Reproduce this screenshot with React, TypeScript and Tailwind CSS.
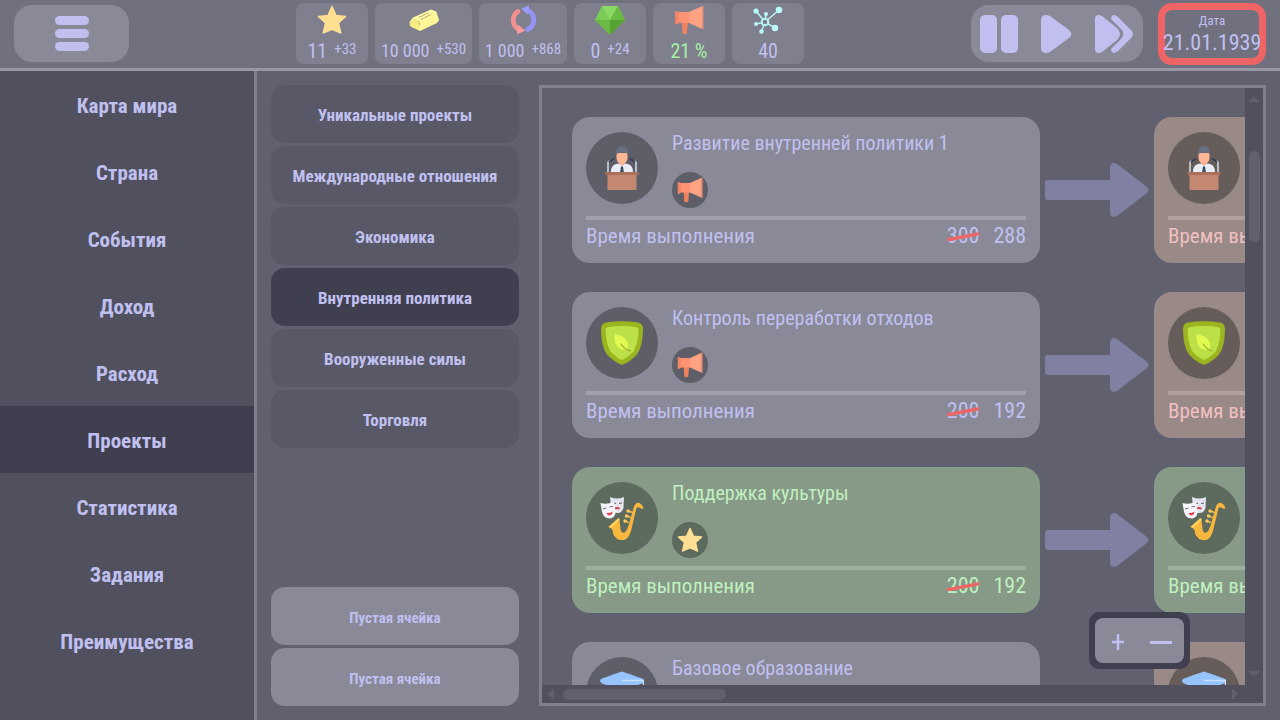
import type { ReactNode } from "react";

type IconProps = { className?: string };

function StarIcon({ className }: IconProps) {
  return (
    <svg viewBox="0 0 30 30" className={className} aria-hidden="true">
      <path
        d="M15 1.5 19 10.4 28.6 11.4 21.5 18 23.8 28 15 24.3 6.2 28 8.5 18 1.4 11.4 11 10.4Z"
        fill="#ffdf92"
        stroke="#ffdf92"
        strokeWidth="1.4"
        strokeLinejoin="round"
      />
    </svg>
  );
}

function GoldIcon({ className }: IconProps) {
  return (
    <svg viewBox="0 0 30 30" className={className} aria-hidden="true">
      <path d="M1 17 4 13 22 5 27 7 29.5 15 28 17.5 11 25.5 1.5 21Z" fill="#fff797" stroke="#fff797" strokeLinejoin="round" />
      <path d="M4 13 22 5 27 7 10 16Z" fill="#fffba6" />
      <path d="M1 17.5 4 13 10 16 10.5 25 1.5 21Z" fill="#f6ec86" />
      <path d="M10 16 10.5 20.5" fill="none" stroke="#b9b26c" strokeWidth="0.8" />
      <path d="m10 12.3 10.5-4.8M12 14.300 22.500 9.300" fill="none" stroke="#8f8b62" strokeWidth="0.8" strokeDasharray="3 0.7" />
    </svg>
  );
}

function CycleIcon({ className }: IconProps) {
  return (
    <svg viewBox="0 0 30 30" className={className} aria-hidden="true">
      <path d="M10 6.5A10.500 10.500 0 0 0 10 24" fill="none" stroke="#f28f8f" strokeWidth="4.8" strokeLinecap="round" />
      <path d="M9.5 28.5 10.5 20.5 16.5 25.5Z" fill="#ff9b9b" stroke="#ff9b9b" strokeLinejoin="round" />
      <path d="M19.5 24.5A10.500 10.500 0 0 0 20 5.500" fill="none" stroke="#9494f4" strokeWidth="4.8" strokeLinecap="round" />
      <path d="M14 4 20.5 1 20 9Z" fill="#9e9eff" stroke="#9e9eff" strokeLinejoin="round" />
    </svg>
  );
}

function GemIcon({ className }: IconProps) {
  return (
    <svg viewBox="0 0 30 30" className={className} aria-hidden="true">
      <path d="M7 1H23L30 15 15 30 0 15Z" fill="#6abb48" />
      <path d="M7 1 15 15H0Z" fill="#7bcb58" />
      <path d="M7 1H23L15 15Z" fill="#8ad867" />
      <path d="M23 1 30 15H15Z" fill="#6abb42" />
      <path d="M0 15H15V30Z" fill="#6ab944" />
      <path d="M15 15H30L15 30Z" fill="#55a233" />
    </svg>
  );
}

function MegaphoneIcon({ className }: IconProps) {
  return (
    <svg viewBox="0 0 30 30" className={className} aria-hidden="true">
      <path d="M8 15H13.5L12.5 28.5H9Z" fill="#ef8260" stroke="#ef8260" strokeLinejoin="round" />
      <path d="M1 6 5 7H16V18H5L1 19.500Z" fill="#ff9373" />
      <path d="M1 6 4.5 7V18.200L1 19.500Z" fill="#f58464" />
      <path d="M15 7 28.5 1V24L15 18Z" fill="#ffa283" />
      <path d="M28.5 1H29.500V24H28.500Z" fill="#f28e70" />
    </svg>
  );
}

function NetworkIcon({ className }: IconProps) {
  return (
    <svg viewBox="0 0 30 30" className={className} aria-hidden="true">
      <g stroke="#b4f7f3" strokeWidth="1.5" fill="none">
        <path d="M12 17 3 6M12 17 26 5M12 17 13 9M12 17 3 19M12 17 8.5 26.5M12 17 22 23" />
        <circle cx="12" cy="17" r="3.3" fill="#7f7f8e" strokeWidth="2" />
      </g>
      <g fill="#b9fbf7">
        <circle cx="3" cy="6" r="2.6" />
        <circle cx="26" cy="5" r="3.3" />
        <circle cx="13" cy="9" r="2" />
        <circle cx="3" cy="19" r="2" />
        <circle cx="8.5" cy="26.5" r="2.3" />
        <circle cx="22" cy="23" r="3.2" />
      </g>
    </svg>
  );
}

function SpeakerIcon({ className }: IconProps) {
  return (
    <svg viewBox="0 0 44 44" className={className} aria-hidden="true">
      <path d="M19 12h6v7l-3 2-3-2Z" fill="#f0a384" />
      <path d="M11 26c0-5 2-7.500 7-8.500l4 1.500 4-1.500c5 1 7 3.500 7 8.500Z" fill="#e9edf8" />
      <path d="m19 16 3 4 3-4v-2h-6Z" fill="#f3a98a" />
      <path d="m21 20.500h2l.8 5.500h-3.600Z" fill="#384764" />
      <path d="M16.5 7h11v4c0 4-2 7-5.500 7s-5.500-3-5.500-7Z" fill="#ffb796" />
      <path d="M16 8c-.5-5.500 2.500-8 6-8S28.500 2.500 28 8l-.5 1-1-2.500c-4 0-6-.5-8 .5-1.500 0-1.500 1-1.500 2Z" fill="#667080" />
      <path d="M8 27V17q0-2 2-2M36 27V17q0-2-2-2" fill="none" stroke="#d8dceb" strokeWidth="1.500" />
      <path d="m9.500 15.500 4-2.500M34.500 15.500 30.500 13" stroke="#34405b" strokeWidth="2" strokeLinecap="round" />
      <path d="M7.500 28H36.500V44H7.500Z" fill="#c48871" />
      <path d="M5.500 26H38.500V29H5.500Z" fill="#ac6f59" />
    </svg>
  );
}

function ShieldIcon({ className }: IconProps) {
  return (
    <svg viewBox="0 0 44 44" className={className} aria-hidden="true">
      <path d="M1 8Q1 2.500 6 1.500 22-1 38 1.500 43 2.500 43 8 43 25 37 33.500 30 41 22 44 14 41 7 33.500 1 25 1 8Z" fill="#9ab51f" />
      <path d="M5.500 9Q5.500 6.500 8 6 22 4 36 6 38.500 6.500 38.500 9 38 23 33.500 30.500 28 36.500 22 39 16 36.500 10.500 30.500 6 23 5.500 9Z" fill="#bce048" />
      <path d="M15 13C24 15 30 20 27.500 28 19 31 13 24 15 13Z" fill="#e0fa52" />
      <path d="M21 23q4 6 9.500 7" fill="none" stroke="#98a92b" strokeWidth="1.100" strokeLinecap="round" />
    </svg>
  );
}

function CultureIcon({ className }: IconProps) {
  return (
    <svg viewBox="0 0 44 44" className={className} aria-hidden="true">
      <path d="M10 1Q17 4 24 1L23.500 12Q22 17 17.500 17 12 17 11 11Z" fill="#e4e5ee" />
      <path d="m13 7 3 .5m3 0 3-.5" stroke="#5b5d70" strokeWidth="1" />
      <path d="M14 12q3-2 6 0l-1 1.500q-2-1-4 0Z" fill="#db3c43" />
      <path d="M.5 7Q7 9 14 5.500L15.500 15Q16 21 10.500 22.500 4 23 2 16Z" fill="#f5f5fb" />
      <path d="m3 13 3.500-1m3-1 3.500-.7" stroke="#6b6d7d" strokeWidth="1" />
      <path d="M6.500 17q3 .5 6-1.500 0 3.500-3 4-2 0-3-2.500Z" fill="#e34148" />
      <path d="M8.500 31 18.500 22C21 28 19.500 35 22.500 36.500 26 38 27.500 32 29 28L34 10.500Q36 6 39.500 7 42 8 43.500 12L42 13Q38 10 36.500 12L31 35Q28.500 44 22 44.500 13 43 12.500 34Q11 31.500 8.500 31Z" fill="#f7b63c" />
      <path d="M8.500 31 18.500 22 20 24 11.500 32Z" fill="#ffd05a" />
      <g fill="#ffc955">
        <circle cx="28" cy="15" r="1.700" />
        <circle cx="26.500" cy="20" r="1.700" />
        <circle cx="25" cy="25" r="1.700" />
        <path d="m28 14 5 2-.5 1-5-1ZM27 19l4 2-.5 1-4-1ZM25 24l4 2-.5 1-4-1Z" />
      </g>
    </svg>
  );
}

function CapIcon({ className }: IconProps) {
  return (
    <svg viewBox="0 0 44 44" className={className} aria-hidden="true">
      <path d="M9 13V25Q22 31 35 25V13Z" fill="#72a8f0" />
      <path d="M22 .500Q30 3 42 7.500 44 8.500 44 9.500 44 11 42 12.500L24 19Q22 20 20 19L2 12.500Q0 11 0 9.500 0 8.500 2 7.500 14 3 22 .500Z" fill="#96c4ff" />
      <path d="M22 9.500H43.500V24" fill="none" stroke="#c9e1ff" strokeWidth="1.600" />
    </svg>
  );
}

function ArrowIcon() {
  return (
    <svg viewBox="0 0 104 54" className="mx-[5px] w-[104px] shrink-0" aria-hidden="true">
      <path
        d="M3 17H65V4Q65.500 0 69.500 0L72 1 102 24Q105 27 102 30L72 53Q65.500 55.500 65 50V37H3Q0 37 0 34V20Q0 17 3 17Z"
        fill="#8080a2"
      />
    </svg>
  );
}

type Stat = { label: string; value: string; delta?: string; Icon: (p: IconProps) => ReactNode; size: string; color: string };

const NARROW = "min-w-[72px] text-xl";
const LILAC = "text-[#c0c0f0]";

const stats: Stat[] = [
  { label: "Рейтинг", value: "11", delta: "+33", Icon: StarIcon, size: NARROW, color: LILAC },
  { label: "Золото", value: "10 000", delta: "+530", Icon: GoldIcon, size: "min-w-[97px] text-lg", color: LILAC },
  { label: "Ресурсы", value: "1 000", delta: "+868", Icon: CycleIcon, size: "min-w-[88px] text-lg", color: LILAC },
  { label: "Кристаллы", value: "0", delta: "+24", Icon: GemIcon, size: NARROW, color: LILAC },
  { label: "Влияние", value: "21 %", Icon: MegaphoneIcon, size: NARROW, color: "text-[#a5f0a5]" },
  { label: "Связи", value: "40", Icon: NetworkIcon, size: NARROW, color: LILAC },
];

function StatCard({ stat }: { stat: Stat }) {
  const { Icon } = stat;
  return (
    <li title={stat.label} className={`flex h-[61px] flex-col items-center rounded-lg bg-[#7f7f8e] pt-[2px] ${stat.size}`}>
      <Icon className="size-[30px]" />
      <span className={`flex items-start gap-[7px] whitespace-nowrap pt-1 leading-6 ${stat.color}`}>
        {stat.value}
        {stat.delta && <span className="text-[15px] leading-5">{stat.delta}</span>}
      </span>
    </li>
  );
}

function Header() {
  return (
    <header className="flex h-[71px] shrink-0 items-start justify-between border-b-[3px] border-[#9797a5] bg-[#70707f] px-[14px] pt-[3px]">
      <button type="button" aria-label="Меню" className="mt-[2px] flex h-[57px] w-[115px] flex-col items-center justify-center gap-1 rounded-[18px] bg-[#898998]">
        <span className="h-[9px] w-[34px] rounded-full bg-[#c0bff0]" />
        <span className="h-[9px] w-[34px] rounded-full bg-[#c0bff0]" />
        <span className="h-[9px] w-[34px] rounded-full bg-[#c0bff0]" />
      </button>
      <ul className="flex gap-[7px]">
        {stats.map((stat) => (
          <StatCard key={stat.label} stat={stat} />
        ))}
      </ul>
      <div className="flex gap-[15px]">
        <div className="mt-[2px] flex h-[57px] items-center gap-[22px] rounded-[18px] bg-[#898998] px-[9px]">
          <button type="button" aria-label="Пауза">
            <svg viewBox="0 0 38 38" className="size-[38px]" fill="#c0bff0">
              <rect width="17" height="38" rx="5" />
              <rect x="21" width="17" height="38" rx="5" />
            </svg>
          </button>
          <button type="button" aria-label="Пуск">
            <svg viewBox="0 0 32 38" className="h-[38px] w-8" fill="#c0bff0">
              <path d="M1 5Q1 0 6 0 8 0 10 1L29 15Q34 19 29 23L10 37Q8 38 6 38 1 38 1 33Z" />
            </svg>
          </button>
          <button type="button" aria-label="Ускорить">
            <svg viewBox="0 0 40 38" className="h-[38px] w-10" fill="#c0bff0">
              <path d="M1 4Q1 0 4.500 0 6 0 8 1L23 13Q29 19 23 25L8 37Q6 38 4.500 38 1 38 1 34Z" />
              <path d="M17 4Q17 0 20.500 0L24 2 37 15Q41 19 37 23L24 36 20.500 38Q17 38 17 34L26 25Q33 19 26 13Z" />
            </svg>
          </button>
        </div>
        <div className="flex h-[62px] w-[108px] flex-col items-center justify-center rounded-[14px] border-[7px] border-[#ef6565] pt-[2px] text-[#c0c0f0]">
          <span className="text-[13px] leading-4">Дата</span>
          <time dateTime="1939-01-21" className="text-[22px] leading-7">21.01.1939</time>
        </div>
      </div>
    </header>
  );
}

const sections = ["Карта мира", "Страна", "События", "Доход", "Расход", "Проекты", "Статистика", "Задания", "Преимущества"];
const categories = ["Уникальные проекты", "Международные отношения", "Экономика", "Внутренняя политика", "Вооруженные силы", "Торговля"];

function Sidebar() {
  return (
    <nav className="w-[257px] shrink-0 border-r-[3px] border-[#7f7f8e] bg-[#50505f]">
      {sections.map((name) => (
        <a
          key={name}
          href="#"
          className={`flex h-[67px] items-center justify-center pt-1 text-[21px] font-bold text-[#c0c0f0] ${name === "Проекты" ? "bg-[#403f4f]" : ""}`}
        >
          {name}
        </a>
      ))}
    </nav>
  );
}

function Categories() {
  return (
    <div className="flex w-[248px] shrink-0 flex-col gap-[3px] text-[17px] font-bold text-[#c0c0f0]">
      {categories.map((name) => (
        <button
          key={name}
          type="button"
          className={`h-[58px] rounded-[14px] pt-1 ${name === "Внутренняя политика" ? "bg-[#403f4f]" : "bg-[#585867]"}`}
        >
          {name}
        </button>
      ))}
      <button type="button" className="mt-auto h-[58px] rounded-[14px] bg-[#898998] pt-1 text-[15px]">Пустая ячейка</button>
      <button type="button" className="h-[58px] rounded-[14px] bg-[#898998] pt-1 text-[15px]">Пустая ячейка</button>
    </div>
  );
}

const tones = {
  open: { card: "bg-[#898998] text-[#c0c0f0]", disc: "bg-[#5e5e68]", rule: "bg-[#a0a0af]" },
  done: { card: "bg-[#879987] text-[#bff0bf]", disc: "bg-[#5d6a5e]", rule: "bg-[#9eb09e]" },
  locked: { card: "bg-[#998987] text-[#f0c0c0]", disc: "bg-[#665c5a]", rule: "bg-[#b0a09f]" },
};

type Tone = keyof typeof tones;
type Project = { title: string; Icon: (p: IconProps) => ReactNode; Reward: (p: IconProps) => ReactNode; before: string; after: string; tone: Tone; nextTone: Tone };

const projects: Project[] = [
  { title: "Развитие внутренней политики 1", Icon: SpeakerIcon, Reward: MegaphoneIcon, before: "300", after: "288", tone: "open", nextTone: "locked" },
  { title: "Контроль переработки отходов", Icon: ShieldIcon, Reward: MegaphoneIcon, before: "200", after: "192", tone: "open", nextTone: "locked" },
  { title: "Поддержка культуры", Icon: CultureIcon, Reward: StarIcon, before: "200", after: "192", tone: "done", nextTone: "done" },
  { title: "Базовое образование", Icon: CapIcon, Reward: StarIcon, before: "200", after: "192", tone: "open", nextTone: "locked" },
];

function ProjectCard({ project, tone, next }: { project: Project; tone: Tone; next?: boolean }) {
  const { Icon, Reward } = project;
  const style = tones[tone];
  return (
    <article className={`h-[146px] w-[468px] shrink-0 rounded-[18px] px-[14px] pt-[15px] ${style.card}`}>
      <div className="flex h-[84px] gap-[14px]">
        <div className={`flex size-[72px] items-center justify-center rounded-full ${style.disc}`}>
          <Icon className="size-[44px]" />
        </div>
        {!next && (
          <div className="flex flex-col gap-[18px]">
            <h2 className="whitespace-nowrap text-xl leading-[22px]">{project.title}</h2>
            <div className={`flex size-9 items-center justify-center rounded-full ${style.disc}`}>
              <Reward className="size-[26px]" />
            </div>
          </div>
        )}
      </div>
      <div className={`h-1 ${style.rule}`} />
      <div className="flex gap-[14px] whitespace-nowrap text-[22px] leading-8">
        <span className="grow text-[21px]">Время выполнения</span>
        {!next && (
          <>
            <s className="relative no-underline">
              {project.before}
              <svg viewBox="0 0 34 12" className="absolute inset-x-0 top-[11px] w-full" aria-hidden="true">
                <path d="M1.500 9 32.500 3" stroke="#ef6565" strokeWidth="3.500" strokeLinecap="round" />
              </svg>
            </s>
            <span>{project.after}</span>
          </>
        )}
      </div>
    </article>
  );
}

function ProjectBoard() {
  return (
    <main className="relative grid min-w-0 grow grid-cols-[minmax(0,1fr)_18px] grid-rows-[minmax(0,1fr)_18px] border-[3px] border-[#7f7f8e] bg-[#50505f]">
      <div className="flex flex-col gap-[29px] overflow-hidden bg-[#60606f] pl-[30px] pt-[29px]">
        {projects.map((project) => (
          <div key={project.title} className="flex items-center">
            <ProjectCard project={project} tone={project.tone} />
            <ArrowIcon />
            <ProjectCard project={project} tone={project.nextTone} next />
          </div>
        ))}
      </div>
      <div className="flex flex-col items-center py-2">
        <svg viewBox="0 0 12 6" className="w-3" fill="#60606f"><path d="M0 6 6 0 12 6Z" /></svg>
        <div className="mt-[49px] h-[91px] w-[11px] rounded-full bg-[#60606f]" />
        <svg viewBox="0 0 12 6" className="mt-auto w-3" fill="#60606f"><path d="M0 0H12L6 6Z" /></svg>
      </div>
      <div className="flex items-center pl-[6px] pr-[7px]">
        <svg viewBox="0 0 6 12" className="h-3" fill="#60606f"><path d="M6 0V12L0 6Z" /></svg>
        <div className="ml-[9px] h-[11px] w-[163px] rounded-full bg-[#60606f]" />
        <svg viewBox="0 0 6 12" className="ml-auto h-3" fill="#60606f"><path d="M0 0 6 6 0 12Z" /></svg>
      </div>
      <div className="absolute bottom-[34px] right-[73px] flex h-[57px] w-[101px] rounded-[10px] border-[6px] border-[#403f4f] bg-[#403f4f]">
        <div className="flex grow items-center justify-between rounded-lg bg-[#898998] pl-[17px] pr-3 pt-[3px]">
          <button type="button" aria-label="Увеличить">
            <svg viewBox="0 0 12 16" className="w-3" stroke="#c0c0f0" strokeWidth="2.500"><path d="M6 0V16M0 8H12" /></svg>
          </button>
          <button type="button" aria-label="Уменьшить">
            <svg viewBox="0 0 22 16" className="w-[22px]" stroke="#c0c0f0" strokeWidth="3"><path d="M0 8.500H22" /></svg>
          </button>
        </div>
      </div>
    </main>
  );
}

export default function App() {
  return (
    <div className="flex h-screen flex-col overflow-hidden bg-[#60606f] font-['Roboto_Condensed','Liberation_Sans_Narrow','Open_Sans_Condensed','DejaVu_Sans_Condensed',sans-serif]">
      <Header />
      <div className="flex min-h-0 grow">
        <Sidebar />
        <div className="flex min-w-0 grow gap-5 p-[14px]">
          <Categories />
          <ProjectBoard />
        </div>
      </div>
    </div>
  );
}
